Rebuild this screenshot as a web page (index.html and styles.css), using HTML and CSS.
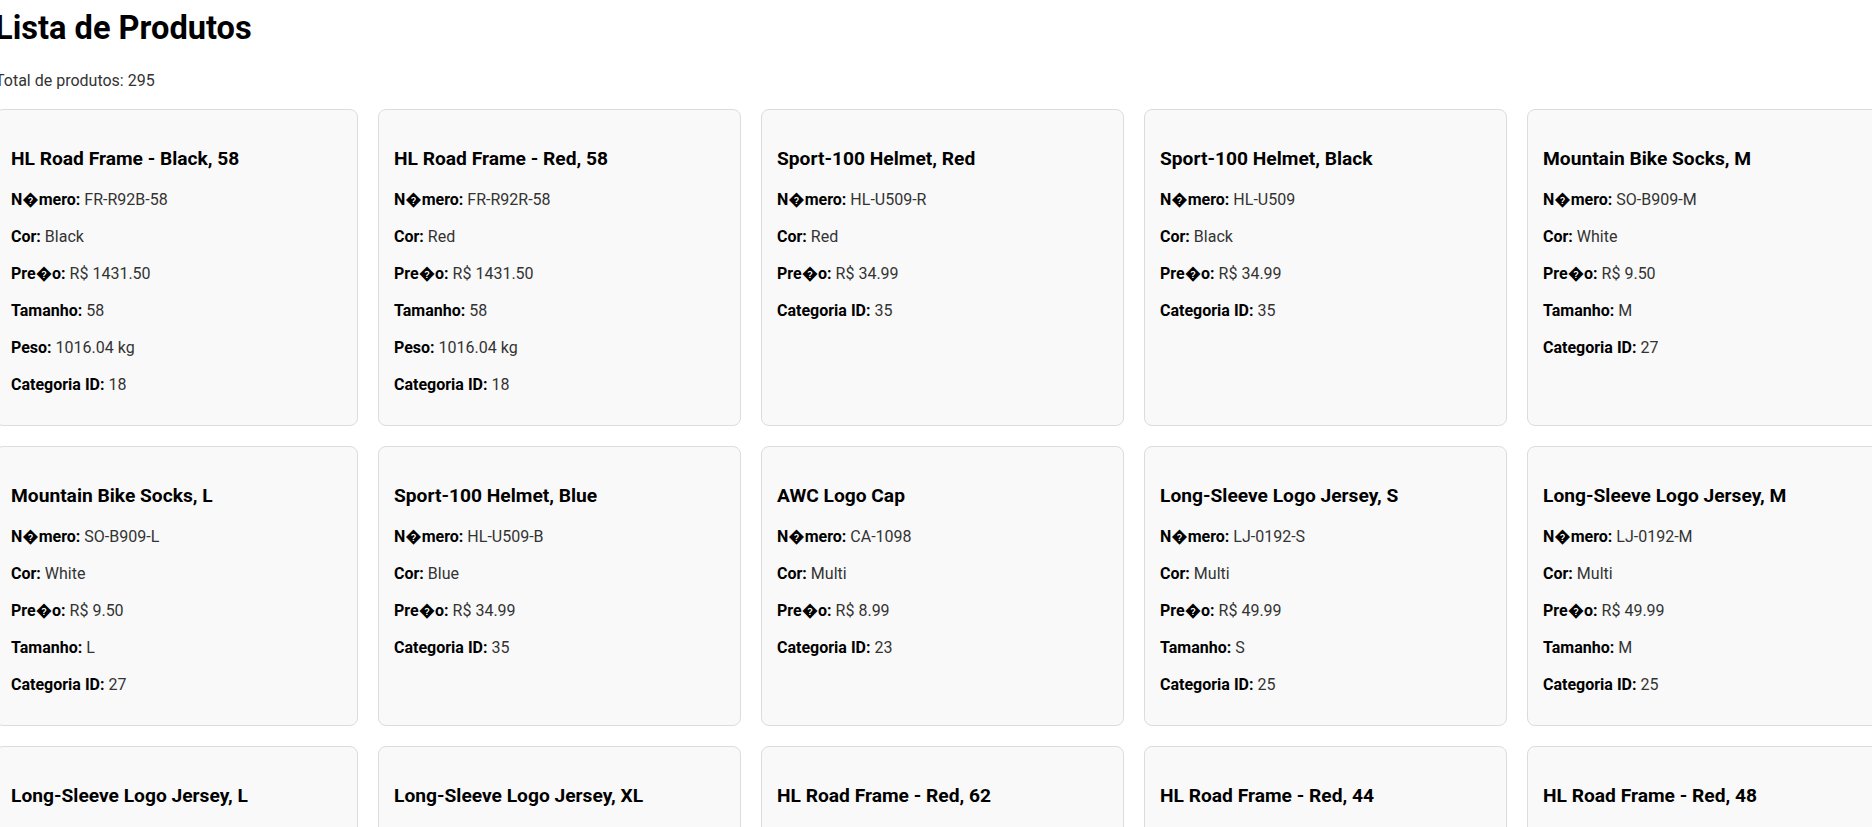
FILE: index.html
```html
<!DOCTYPE html>
<html lang="pt">
<head>
<meta charset="utf-8">
<title>Lista de Produtos</title>
<link rel="stylesheet" href="styles.css">
</head>
<body>
<div class="page">
  <h1 class="title">Lista de Produtos</h1>
  <p class="total">Total de produtos: 295</p>
  <div class="grid">
    <div class="card">
      <h3 class="name">HL Road Frame - Black, 58</h3>
      <p class="row"><strong>N�mero:</strong> FR-R92B-58</p>
      <p class="row"><strong>Cor:</strong> Black</p>
      <p class="row"><strong>Pre�o:</strong> R$ 1431.50</p>
      <p class="row"><strong>Tamanho:</strong> 58</p>
      <p class="row"><strong>Peso:</strong> 1016.04 kg</p>
      <p class="row"><strong>Categoria ID:</strong> 18</p>
    </div>
    <div class="card">
      <h3 class="name">HL Road Frame - Red, 58</h3>
      <p class="row"><strong>N�mero:</strong> FR-R92R-58</p>
      <p class="row"><strong>Cor:</strong> Red</p>
      <p class="row"><strong>Pre�o:</strong> R$ 1431.50</p>
      <p class="row"><strong>Tamanho:</strong> 58</p>
      <p class="row"><strong>Peso:</strong> 1016.04 kg</p>
      <p class="row"><strong>Categoria ID:</strong> 18</p>
    </div>
    <div class="card">
      <h3 class="name">Sport-100 Helmet, Red</h3>
      <p class="row"><strong>N�mero:</strong> HL-U509-R</p>
      <p class="row"><strong>Cor:</strong> Red</p>
      <p class="row"><strong>Pre�o:</strong> R$ 34.99</p>
      <p class="row"><strong>Categoria ID:</strong> 35</p>
    </div>
    <div class="card">
      <h3 class="name">Sport-100 Helmet, Black</h3>
      <p class="row"><strong>N�mero:</strong> HL-U509</p>
      <p class="row"><strong>Cor:</strong> Black</p>
      <p class="row"><strong>Pre�o:</strong> R$ 34.99</p>
      <p class="row"><strong>Categoria ID:</strong> 35</p>
    </div>
    <div class="card">
      <h3 class="name">Mountain Bike Socks, M</h3>
      <p class="row"><strong>N�mero:</strong> SO-B909-M</p>
      <p class="row"><strong>Cor:</strong> White</p>
      <p class="row"><strong>Pre�o:</strong> R$ 9.50</p>
      <p class="row"><strong>Tamanho:</strong> M</p>
      <p class="row"><strong>Categoria ID:</strong> 27</p>
    </div>

    <div class="card">
      <h3 class="name">Mountain Bike Socks, L</h3>
      <p class="row"><strong>N�mero:</strong> SO-B909-L</p>
      <p class="row"><strong>Cor:</strong> White</p>
      <p class="row"><strong>Pre�o:</strong> R$ 9.50</p>
      <p class="row"><strong>Tamanho:</strong> L</p>
      <p class="row"><strong>Categoria ID:</strong> 27</p>
    </div>
    <div class="card">
      <h3 class="name">Sport-100 Helmet, Blue</h3>
      <p class="row"><strong>N�mero:</strong> HL-U509-B</p>
      <p class="row"><strong>Cor:</strong> Blue</p>
      <p class="row"><strong>Pre�o:</strong> R$ 34.99</p>
      <p class="row"><strong>Categoria ID:</strong> 35</p>
    </div>
    <div class="card">
      <h3 class="name">AWC Logo Cap</h3>
      <p class="row"><strong>N�mero:</strong> CA-1098</p>
      <p class="row"><strong>Cor:</strong> Multi</p>
      <p class="row"><strong>Pre�o:</strong> R$ 8.99</p>
      <p class="row"><strong>Categoria ID:</strong> 23</p>
    </div>
    <div class="card">
      <h3 class="name">Long-Sleeve Logo Jersey, S</h3>
      <p class="row"><strong>N�mero:</strong> LJ-0192-S</p>
      <p class="row"><strong>Cor:</strong> Multi</p>
      <p class="row"><strong>Pre�o:</strong> R$ 49.99</p>
      <p class="row"><strong>Tamanho:</strong> S</p>
      <p class="row"><strong>Categoria ID:</strong> 25</p>
    </div>
    <div class="card">
      <h3 class="name">Long-Sleeve Logo Jersey, M</h3>
      <p class="row"><strong>N�mero:</strong> LJ-0192-M</p>
      <p class="row"><strong>Cor:</strong> Multi</p>
      <p class="row"><strong>Pre�o:</strong> R$ 49.99</p>
      <p class="row"><strong>Tamanho:</strong> M</p>
      <p class="row"><strong>Categoria ID:</strong> 25</p>
    </div>

    <div class="card">
      <h3 class="name">Long-Sleeve Logo Jersey, L</h3>
      <p class="row"><strong>N�mero:</strong> LJ-0192-L</p>
      <p class="row"><strong>Cor:</strong> Multi</p>
      <p class="row"><strong>Pre�o:</strong> R$ 49.99</p>
      <p class="row"><strong>Tamanho:</strong> L</p>
      <p class="row"><strong>Categoria ID:</strong> 25</p>
    </div>
    <div class="card">
      <h3 class="name">Long-Sleeve Logo Jersey, XL</h3>
      <p class="row"><strong>N�mero:</strong> LJ-0192-X</p>
      <p class="row"><strong>Cor:</strong> Multi</p>
      <p class="row"><strong>Pre�o:</strong> R$ 49.99</p>
      <p class="row"><strong>Tamanho:</strong> XL</p>
      <p class="row"><strong>Categoria ID:</strong> 25</p>
    </div>
    <div class="card">
      <h3 class="name">HL Road Frame - Red, 62</h3>
      <p class="row"><strong>N�mero:</strong> FR-R92R-62</p>
      <p class="row"><strong>Cor:</strong> Red</p>
      <p class="row"><strong>Pre�o:</strong> R$ 1431.50</p>
      <p class="row"><strong>Tamanho:</strong> 62</p>
      <p class="row"><strong>Peso:</strong> 1043.26 kg</p>
      <p class="row"><strong>Categoria ID:</strong> 18</p>
    </div>
    <div class="card">
      <h3 class="name">HL Road Frame - Red, 44</h3>
      <p class="row"><strong>N�mero:</strong> FR-R92R-44</p>
      <p class="row"><strong>Cor:</strong> Red</p>
      <p class="row"><strong>Pre�o:</strong> R$ 1431.50</p>
      <p class="row"><strong>Tamanho:</strong> 44</p>
      <p class="row"><strong>Peso:</strong> 961.61 kg</p>
      <p class="row"><strong>Categoria ID:</strong> 18</p>
    </div>
    <div class="card">
      <h3 class="name">HL Road Frame - Red, 48</h3>
      <p class="row"><strong>N�mero:</strong> FR-R92R-48</p>
      <p class="row"><strong>Cor:</strong> Red</p>
      <p class="row"><strong>Pre�o:</strong> R$ 1431.50</p>
      <p class="row"><strong>Tamanho:</strong> 48</p>
      <p class="row"><strong>Peso:</strong> 979.75 kg</p>
      <p class="row"><strong>Categoria ID:</strong> 18</p>
    </div>
  </div>
</div>
</body>
</html>
```
FILE: styles.css
```css
html {
  overflow: hidden;
}

body {
  margin: 0;
  background: #fff;
  color: #333;
  font-family: Roboto, "Open Sans", "DejaVu Sans", sans-serif;
  font-size: 16px;
}

.page {
  margin-left: -5px;
}

.title {
  margin: 6.5px 0 20px;
  font-size: 32.6px;
  line-height: 43px;
  font-weight: 700;
  color: #000;
}

.total {
  margin: 0 0 18px;
  font-size: 16px;
  line-height: 21px;
  color: #333;
}

.grid {
  display: grid;
  grid-template-columns: repeat(5, 363px);
  gap: 20px;
}

.card {
  box-sizing: border-box;
  background: #f9f9f9;
  border: 1px solid #dcdcdc;
  border-radius: 8px;
  padding: 15px;
}

.name {
  margin: 21.2px 0 18.2px;
  font-size: 19.2px;
  line-height: 25px;
  font-weight: 700;
  color: #000;
}

.row {
  margin: 16px 0;
  font-size: 16px;
  line-height: 21px;
  color: #333;
}

.row:last-child {
  margin-bottom: 15px;
}

.row strong {
  color: #000;
  font-weight: 700;
}
```
